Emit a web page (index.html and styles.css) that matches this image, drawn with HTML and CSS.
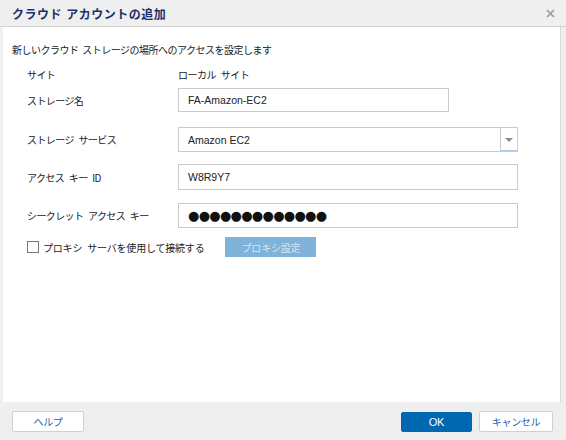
FILE: index.html
```html
<!DOCTYPE html>
<html lang="ja">
<head>
<meta charset="utf-8">
<title>クラウド アカウントの追加</title>
<link rel="stylesheet" href="styles.css">
</head>
<body>
<div class="dialog">
  <div class="titlebar">
    <span class="title">クラウド アカウントの追加</span>
    <svg class="close" width="9" height="9" viewBox="0 0 9 9"><path d="M1 1 L8 8 M8 1 L1 8" stroke="#9a9a9a" stroke-width="1.6" fill="none"/></svg>
  </div>
  <div class="content">
    <div class="desc">新しいクラウド ストレージの場所へのアクセスを設定します</div>
    <div class="row row-site">
      <div class="label">サイト</div>
      <div class="value">ローカル サイト</div>
    </div>
    <div class="row row-name">
      <div class="label">ストレージ名</div>
      <div class="field short"><span class="latin">FA-Amazon-EC2</span></div>
    </div>
    <div class="row row-service">
      <div class="label">ストレージ サービス</div>
      <div class="field select">
        <span class="latin sel-text">Amazon EC2</span>
        <span class="arrow"><svg width="8" height="4" viewBox="0 0 8 4"><path d="M0 0 H8 L4 4 Z" fill="#8a8a8a"/></svg></span>
      </div>
    </div>
    <div class="row row-key">
      <div class="label">アクセス キー ID</div>
      <div class="field"><span class="latin">W8R9Y7</span></div>
    </div>
    <div class="row row-secret">
      <div class="label">シークレット アクセス キー</div>
      <div class="field"><span class="dots">●●●●●●●●●●●●●</span></div>
    </div>
    <div class="row row-proxy">
      <span class="checkbox"></span>
      <span class="cb-label">プロキシ サーバを使用して接続する</span>
      <span class="proxy-btn">プロキシ設定</span>
    </div>
  </div>
  <div class="footer">
    <span class="btn help">ヘルプ</span>
    <span class="spacer"></span>
    <span class="btn ok">OK</span>
    <span class="btn cancel">キャンセル</span>
  </div>
</div>
</body>
</html>
```
FILE: styles.css
```css
html, body {
  margin: 0;
  padding: 0;
  background: #efefef;
}
body {
  width: 566px;
  height: 440px;
  overflow: hidden;
  font-family: "Noto Sans CJK JP", "Liberation Sans", sans-serif;
  font-size: 10px;
  color: #222;
}
.dialog {
  display: flex;
  flex-direction: column;
  height: 440px;
}
.titlebar {
  height: 26px;
  border-bottom: 1px solid #d2d2d2;
  display: flex;
  align-items: center;
  padding: 0 10px 0 12px;
  background: #efefef;
}
.title {
  font-size: 12px;
  font-weight: bold;
  color: #1f2f6b;
  letter-spacing: 0.5px;
  word-spacing: 1px;
  flex: 1;
}
.close {
  margin-right: 1px;
}
.content {
  background: #fff;
  margin: 0 5px 0 3px;
  border-right: 1px solid #dcdcdc;
  height: 375px;
  padding-top: 15px;
  box-sizing: border-box;
}
.desc {
  padding-left: 9px;
  height: 16px;
  line-height: 16px;
  letter-spacing: -0.5px;
  word-spacing: 2px;
}
.row {
  display: flex;
  align-items: center;
  padding-left: 24px;
}
.label {
  width: 151px;
  letter-spacing: -0.6px;
  word-spacing: 3px;
}
.value {
  letter-spacing: -0.5px;
  word-spacing: 3px;
}
.row-site { margin-top: 8px; height: 16px; }
.row-name { margin-top: 6px; height: 24px; }
.row-service { margin-top: 15px; height: 25px; }
.row-key { margin-top: 12px; height: 26px; }
.row-secret { margin-top: 13px; height: 25px; }
.row-proxy { margin-top: 9px; height: 20px; }
.field {
  width: 340px;
  height: 100%;
  box-sizing: border-box;
  border: 1px solid #cbcbcb;
  display: flex;
  align-items: center;
  padding-left: 9px;
}
.field.short {
  width: 271px;
}
.latin {
  font-family: "Liberation Sans", sans-serif;
  font-size: 10.5px;
  color: #222;
}
.select {
  padding-left: 0;
}
.sel-text {
  flex: 1;
  padding-left: 9px;
}
.arrow {
  width: 17px;
  height: 100%;
  border-left: 1px solid #cbcbcb;
  border-bottom: 1px solid #a9c9e8;
  box-sizing: border-box;
  display: flex;
  align-items: center;
  justify-content: center;
  padding-top: 1px;
}
.dots {
  font-family: "DejaVu Sans", sans-serif;
  font-size: 13px;
  letter-spacing: -0.7px;
  color: #111;
}
.checkbox {
  width: 12px;
  height: 12px;
  border: 1px solid #777;
  box-sizing: border-box;
  background: #fff;
}
.cb-label {
  margin-left: 4px;
  letter-spacing: -0.2px;
  word-spacing: 3px;
}
.proxy-btn {
  margin-left: 21px;
  width: 91px;
  height: 20px;
  background: #7fb3da;
  color: #d6e7f5;
  display: flex;
  align-items: center;
  justify-content: center;
  letter-spacing: -0.2px;
}
.footer {
  flex: 1;
  display: flex;
  align-items: flex-start;
  padding: 9px 13px 0 12px;
  background: #efefef;
}
.spacer {
  flex: 1;
}
.btn {
  height: 21px;
  box-sizing: border-box;
  display: flex;
  align-items: center;
  justify-content: center;
  border: 1px solid #d0d0d0;
  background: #fff;
  color: #1a68b0;
  border-radius: 2px;
  letter-spacing: -0.3px;
}
.help {
  width: 72px;
}
.ok {
  width: 71px;
  background: #0067b1;
  border-color: #0067b1;
  color: #fff;
  font-family: "Liberation Sans", sans-serif;
  font-size: 11px;
  margin-top: 1px;
  height: 20px;
}
.cancel {
  width: 74px;
  margin-left: 7px;
}
```
